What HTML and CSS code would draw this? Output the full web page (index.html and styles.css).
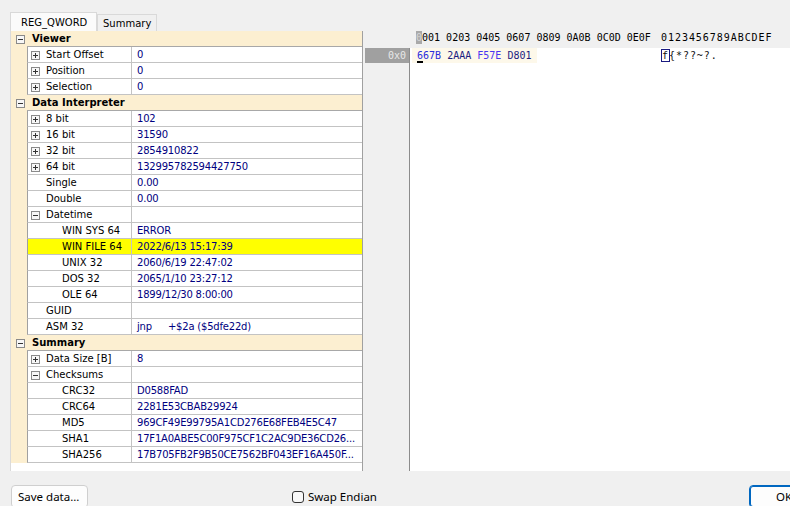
FILE: index.html
```html
<!DOCTYPE html>
<html>
<head>
<meta charset="utf-8">
<title>REG_QWORD</title>
<link rel="stylesheet" href="styles.css">
</head>
<body>
<div class="window">
  <div class="tabs">
    <div class="tab active">REG_QWORD</div>
    <div class="tab">Summary</div>
  </div>
  <div class="main">
    <div class="grid">
      <div class="row cat first"><span class="gut"><svg class="bx" width="9" height="9" viewBox="0 0 9 9"><rect x="0.5" y="0.5" width="8" height="8" fill="#f7f7f7" stroke="#8a8a8a"/><path d="M2 4.5h5" stroke="#333"/></svg></span><span class="cattext">Viewer</span></div>
      <div class="row"><span class="gut"></span><span class="name"><svg class="bx" width="9" height="9" viewBox="0 0 9 9"><rect x="0.5" y="0.5" width="8" height="8" fill="#f7f7f7" stroke="#8a8a8a"/><path d="M2 4.5h5M4.5 2v5" stroke="#333"/></svg>Start Offset</span><span class="val">0</span></div>
      <div class="row"><span class="gut"></span><span class="name"><svg class="bx" width="9" height="9" viewBox="0 0 9 9"><rect x="0.5" y="0.5" width="8" height="8" fill="#f7f7f7" stroke="#8a8a8a"/><path d="M2 4.5h5M4.5 2v5" stroke="#333"/></svg>Position</span><span class="val">0</span></div>
      <div class="row"><span class="gut"></span><span class="name"><svg class="bx" width="9" height="9" viewBox="0 0 9 9"><rect x="0.5" y="0.5" width="8" height="8" fill="#f7f7f7" stroke="#8a8a8a"/><path d="M2 4.5h5M4.5 2v5" stroke="#333"/></svg>Selection</span><span class="val">0</span></div>

      <div class="row cat"><span class="gut"><svg class="bx" width="9" height="9" viewBox="0 0 9 9"><rect x="0.5" y="0.5" width="8" height="8" fill="#f7f7f7" stroke="#8a8a8a"/><path d="M2 4.5h5" stroke="#333"/></svg></span><span class="cattext">Data Interpreter</span></div>
      <div class="row"><span class="gut"></span><span class="name"><svg class="bx" width="9" height="9" viewBox="0 0 9 9"><rect x="0.5" y="0.5" width="8" height="8" fill="#f7f7f7" stroke="#8a8a8a"/><path d="M2 4.5h5M4.5 2v5" stroke="#333"/></svg>8 bit</span><span class="val">102</span></div>
      <div class="row"><span class="gut"></span><span class="name"><svg class="bx" width="9" height="9" viewBox="0 0 9 9"><rect x="0.5" y="0.5" width="8" height="8" fill="#f7f7f7" stroke="#8a8a8a"/><path d="M2 4.5h5M4.5 2v5" stroke="#333"/></svg>16 bit</span><span class="val">31590</span></div>
      <div class="row"><span class="gut"></span><span class="name"><svg class="bx" width="9" height="9" viewBox="0 0 9 9"><rect x="0.5" y="0.5" width="8" height="8" fill="#f7f7f7" stroke="#8a8a8a"/><path d="M2 4.5h5M4.5 2v5" stroke="#333"/></svg>32 bit</span><span class="val">2854910822</span></div>
      <div class="row"><span class="gut"></span><span class="name"><svg class="bx" width="9" height="9" viewBox="0 0 9 9"><rect x="0.5" y="0.5" width="8" height="8" fill="#f7f7f7" stroke="#8a8a8a"/><path d="M2 4.5h5M4.5 2v5" stroke="#333"/></svg>64 bit</span><span class="val">132995782594427750</span></div>
      <div class="row"><span class="gut"></span><span class="name nobox">Single</span><span class="val">0.00</span></div>
      <div class="row"><span class="gut"></span><span class="name nobox">Double</span><span class="val">0.00</span></div>
      <div class="row"><span class="gut"></span><span class="name"><svg class="bx" width="9" height="9" viewBox="0 0 9 9"><rect x="0.5" y="0.5" width="8" height="8" fill="#f7f7f7" stroke="#8a8a8a"/><path d="M2 4.5h5" stroke="#333"/></svg>Datetime</span><span class="val"></span></div>
      <div class="row"><span class="gut"></span><span class="name l2">WIN SYS 64</span><span class="val">ERROR</span></div>
      <div class="row hl"><span class="gut"></span><span class="name l2">WIN FILE 64</span><span class="val">2022/6/13 15:17:39</span></div>
      <div class="row"><span class="gut"></span><span class="name l2">UNIX 32</span><span class="val">2060/6/19 22:47:02</span></div>
      <div class="row"><span class="gut"></span><span class="name l2">DOS 32</span><span class="val">2065/1/10 23:27:12</span></div>
      <div class="row"><span class="gut"></span><span class="name l2">OLE 64</span><span class="val">1899/12/30 8:00:00</span></div>
      <div class="row"><span class="gut"></span><span class="name nobox">GUID</span><span class="val"></span></div>
      <div class="row"><span class="gut"></span><span class="name nobox">ASM 32</span><span class="val">jnp<span class="operand">+$2a ($5dfe22d)</span></span></div>

      <div class="row cat"><span class="gut"><svg class="bx" width="9" height="9" viewBox="0 0 9 9"><rect x="0.5" y="0.5" width="8" height="8" fill="#f7f7f7" stroke="#8a8a8a"/><path d="M2 4.5h5" stroke="#333"/></svg></span><span class="cattext">Summary</span></div>
      <div class="row"><span class="gut"></span><span class="name"><svg class="bx" width="9" height="9" viewBox="0 0 9 9"><rect x="0.5" y="0.5" width="8" height="8" fill="#f7f7f7" stroke="#8a8a8a"/><path d="M2 4.5h5M4.5 2v5" stroke="#333"/></svg>Data Size [B]</span><span class="val">8</span></div>
      <div class="row"><span class="gut"></span><span class="name"><svg class="bx" width="9" height="9" viewBox="0 0 9 9"><rect x="0.5" y="0.5" width="8" height="8" fill="#f7f7f7" stroke="#8a8a8a"/><path d="M2 4.5h5" stroke="#333"/></svg>Checksums</span><span class="val"></span></div>
      <div class="row"><span class="gut"></span><span class="name l2">CRC32</span><span class="val">D0588FAD</span></div>
      <div class="row"><span class="gut"></span><span class="name l2">CRC64</span><span class="val">2281E53CBAB29924</span></div>
      <div class="row"><span class="gut"></span><span class="name l2">MD5</span><span class="val">969CF49E99795A1CD276E68FEB4E5C47</span></div>
      <div class="row"><span class="gut"></span><span class="name l2">SHA1</span><span class="val">17F1A0ABE5C00F975CF1C2AC9DE36CD26...</span></div>
      <div class="row"><span class="gut"></span><span class="name l2">SHA256</span><span class="val">17B705FB2F9B50CE7562BF043EF16A450F...</span></div>
    </div>
    <div class="hex">
      <div class="hexhead"><span class="addrhead"></span><span class="hexcols"><span class="colhl">0</span>001 0203 0405 0607 0809 0A0B 0C0D 0E0F</span><span class="asc">0123456789ABCDEF</span></div>
      <div class="hexbody">
        <div class="addrcol"><div class="addr">0x0</div></div>
        <div class="data">
          <div class="dline"><span class="bytes"><span class="g1"><span class="cur">6</span>67B</span> <span class="g2">2AAA</span> <span class="g3">F57E</span> <span class="g2">D801</span> </span><span class="asc"><span class="acur">f</span>{*??~?.</span></div>
        </div>
      </div>
    </div>
  </div>
  <div class="bottom">
    <div class="btn save">Save data...</div>
    <label class="chk"><span class="chkbox"></span>Swap Endian</label>
    <div class="btn ok">OK</div>
  </div>
</div>
</body>
</html>
```

FILE: styles.css
```css
html, body {
  margin: 0;
  padding: 0;
}
body {
  width: 790px;
  height: 506px;
  overflow: hidden;
  background: #f0f0f0;
  font-family: "DejaVu Sans", sans-serif;
  font-size: 10px;
  color: #000;
}
.window {
  display: flex;
  flex-direction: column;
  height: 506px;
}

/* tabs */
.tabs {
  height: 31px;
  flex: none;
  display: flex;
  align-items: flex-end;
  padding-left: 10px;
  box-sizing: border-box;
}
.tab {
  height: 17px;
  box-sizing: border-box;
  border: 1px solid #d9d9d9;
  border-bottom: none;
  background: #f0f0f0;
  padding: 0 5px;
  line-height: 17px;
  color: #000;
}
.tab.active {
  height: 19px;
  line-height: 19px;
  background: #fbfbfb;
  padding: 0 10px;
  width: 87px;
}

/* main split */
.main {
  height: 440px;
  flex: none;
  display: flex;
  margin-left: 10px;
  border-left: 1px solid #dadada;
}
.grid {
  width: 351px;
  flex: none;
  background: #fff;
  border-right: 1px solid #a0a0a0;
  display: flex;
  flex-direction: column;
}
.row {
  display: flex;
  height: 16px;
  flex: none;
}
.gut {
  width: 16px;
  flex: none;
  background: #fcefd1;
  display: flex;
  align-items: center;
}
.cat .gut {
  padding-left: 5px;
  box-sizing: border-box;
}
.cattext {
  flex: 1;
  background: #fcefd1;
  font-weight: bold;
  box-sizing: border-box;
  padding-top: 1px;
  line-height: 14px;
  padding-left: 5px;
  border-bottom: 1px solid #a8a8a8;
}
.cat:not(.first) {
  box-shadow: inset 0 1px 0 #a0a0a0;
}
.name {
  width: 104px;
  flex: none;
  box-sizing: border-box;
  border-left: 1px solid #a0a0a0;
  border-bottom: 1px solid #c3c3c3;
  display: flex;
  align-items: center;
  padding-left: 3px;
  padding-top: 1px;
  white-space: nowrap;
  overflow: hidden;
  line-height: 14px;
}
.name .bx {
  flex: none;
  margin-right: 6px;
}
.name.nobox {
  padding-left: 18px;
}
.name.l2 {
  padding-left: 34px;
}
.val {
  flex: 1;
  box-sizing: border-box;
  border-left: 1px solid #c3c3c3;
  border-bottom: 1px solid #c3c3c3;
  padding-left: 5px;
  padding-top: 1px;
  color: #000080;
  letter-spacing: -0.2px;
  line-height: 14px;
  white-space: nowrap;
  overflow: hidden;
}
.operand {
  margin-left: 16px;
}
.hl .name,
.hl .val {
  background: #ffff00;
}

/* hex viewer */
.hex {
  flex: 1;
  margin-left: 1px;
  display: flex;
  flex-direction: column;
  font-family: "DejaVu Sans Mono", monospace;
  font-size: 10px;
}
.hexhead {
  height: 17px;
  flex: none;
  display: flex;
  line-height: 13px;
  white-space: pre;
  color: #000;
}
.addrhead {
  width: 52px;
  flex: none;
}
.hexcols {
  width: 245px;
  flex: none;
}
.colhl {
  display: inline-block;
  background: #a9a9a9;
  color: #d6d6d6;
  height: 13px;
}
.asc {
  letter-spacing: 0.95px;
}
.hexbody {
  flex: 1;
  display: flex;
}
.addrcol {
  width: 44px;
  flex: none;
  padding-left: 1px;
  border-right: 1px solid #8c8c8c;
}
.addr {
  height: 15px;
  background: #a0a0a0;
  color: #e8e8e8;
  text-align: right;
  padding-right: 3px;
  line-height: 15px;
}
.data {
  flex: 1;
  background: #fff;
  padding-left: 2px;
}
.dline {
  display: flex;
  height: 15px;
  line-height: 15px;
  white-space: pre;
}
.bytes {
  width: 125px;
  box-sizing: border-box;
  padding-left: 5px;
  background: #fdf8ea;
  flex: none;
}
.dline .asc {
  margin-left: 125px;
  color: #111;
}
.g1 { color: #2b2bdc; }
.g2 { color: #1c1c80; }
.g3 { color: #4a36f0; }
.cur {
  border-bottom: 2px solid #000;
}
.acur {
  outline: 1px solid #1a1a80;
  outline-offset: 0;
}

/* bottom bar */
.bottom {
  flex: 1;
  display: flex;
  align-items: flex-start;
  padding-top: 14px;
  padding-left: 11px;
  font-family: "Noto Sans", sans-serif;
  font-size: 11.5px;
}
.btn {
  height: 23px;
  box-sizing: border-box;
  border: 1px solid #cfcfcf;
  border-radius: 4px;
  background: #fdfdfd;
  padding: 0 6px;
  line-height: 21px;
  flex: none;
  white-space: nowrap;
}
.save {
  width: 77px;
}
.chk {
  display: flex;
  align-items: center;
  flex: none;
  white-space: nowrap;
  margin-left: 204px;
  margin-top: 1px;
  height: 21px;
}
.chkbox {
  width: 12px;
  height: 12px;
  box-sizing: border-box;
  border: 1px solid #333;
  border-radius: 3px;
  background: #f8f8f8;
  margin-right: 4px;
}
.ok {
  margin-left: auto;
  margin-right: -34px;
  width: 75px;
  border-color: #0067c0;
  box-shadow: inset 0 0 0 1px #0067c0;
  padding-left: 26px;
}
```
